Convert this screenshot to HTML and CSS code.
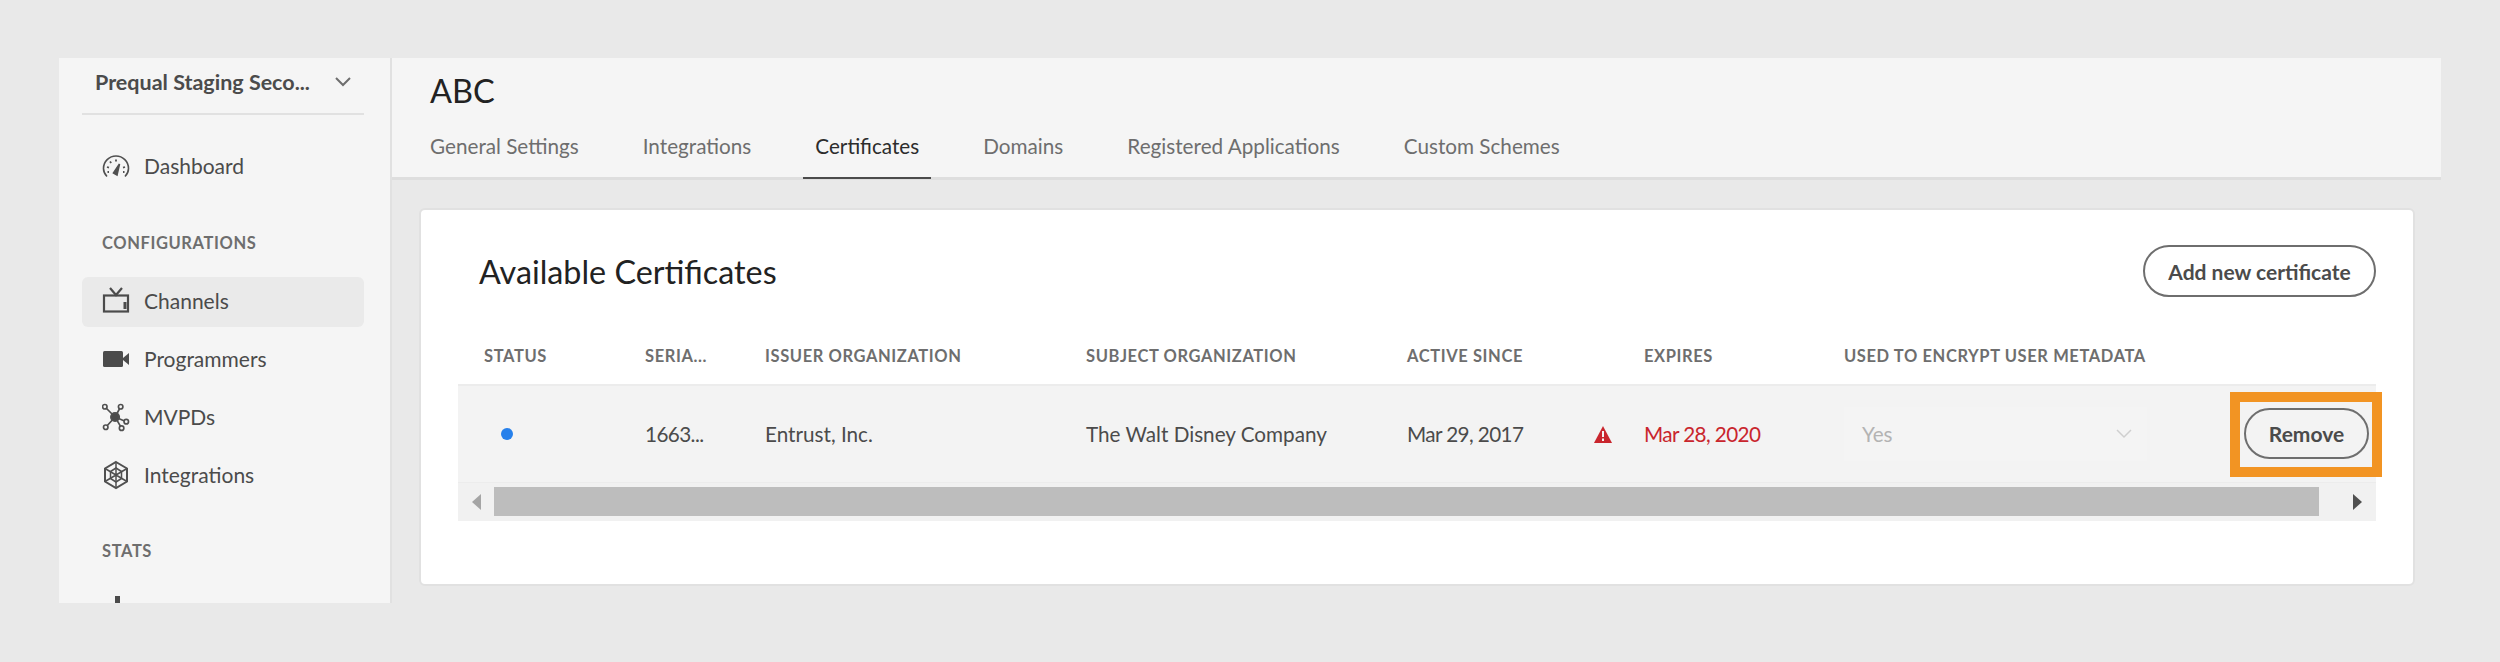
FILE: index.html
```html
<!DOCTYPE html>
<html lang="en">
<head>
    <meta charset="UTF-8">
    <title>Certificates</title>
    <link rel="stylesheet" href="styles.css">
</head>
<body>
    <div class="app">
        <div class="sidebar">
            <div class="switcher">
                <span>Prequal Staging Seco...</span>
                <svg width="16" height="10" viewBox="0 0 16 10"><path d="M1 1l7 7 7-7" fill="none" stroke="#6e6e6e" stroke-width="2"/></svg>
            </div>
            <div class="nav-item">
                <svg width="28" height="24" viewBox="0 0 28 24" fill="none" stroke="#505050" stroke-width="1.600"><path d="M5 22.500C2.500 20 1.500 17 1.500 14.500a12.500 12.500 0 0 1 25 0c0 2.500-1 5.500-3.500 8"/><path d="M11.500 19L17.500 10l-2.500 11z" fill="#505050"/><path d="M14 5.500v2M8 7.500l1.200 1.500M5 13l2 .6M23 13l-2 .6M5.500 18h1.500M21 18h1.500" stroke-width="1.800"/></svg>
                Dashboard
            </div>
            <div class="nav-title">CONFIGURATIONS</div>
            <div class="nav-item active">
                <svg width="28" height="28" viewBox="0 0 28 28" fill="none" stroke="#4b4b4b" stroke-width="2.200"><rect x="2" y="8.500" width="24" height="16"/><path d="M8 1l6 7 6-7"/><path d="M23 15v7" stroke-width="3"/></svg>
                Channels
            </div>
            <div class="nav-item">
                <svg width="28" height="24" viewBox="0 0 28 24"><rect x="1" y="4" width="20" height="16" rx="1.500" fill="#4b4b4b"/><path d="M21 11l6-5v12l-6-5z" fill="#4b4b4b"/></svg>
                Programmers
            </div>
            <div class="nav-item">
                <svg width="30" height="30" viewBox="0 0 30 30" fill="none" stroke="#505050" stroke-width="1.800"><path d="M14 15L3 4M14 15L20 4M14 15L26 20M14 15L21 27M14 15L4 26"/><circle cx="14" cy="15" r="4.500" fill="#4b4b4b"/><circle cx="3" cy="4" r="2.400" fill="#f5f5f5"/><circle cx="20" cy="4" r="2.400" fill="#f5f5f5"/><circle cx="26" cy="20" r="2.400" fill="#f5f5f5"/><circle cx="21" cy="27" r="2.400" fill="#f5f5f5"/><circle cx="4" cy="26" r="2.400" fill="#f5f5f5"/></svg>
                MVPDs
            </div>
            <div class="nav-item">
                <svg width="28" height="30" viewBox="0 0 28 30" fill="none" stroke="#505050" stroke-width="2"><path d="M14 2l11 6.500v13L14 28 3 21.500v-13z"/><path d="M14 2v26M3 8.500l22 13M25 8.500l-22 13" stroke-width="1.500"/><path d="M14 8l5.500 3.500v7L14 22l-5.500-3.500v-7z" stroke-width="1.500"/></svg>
                Integrations
            </div>
            <div class="nav-title stats">STATS</div>
            <div class="nav-item">
                <svg width="28" height="28" viewBox="0 0 28 28" fill="#4b4b4b"><rect x="13" y="0" width="5" height="26"/><rect x="3" y="8" width="5" height="18"/></svg>
                Reports
            </div>
        </div>
        <div class="main">
            <div class="page-head">
                <h1>ABC</h1>
                <div class="tabs">
                    <a class="tab">General Settings</a>
                    <a class="tab">Integrations</a>
                    <a class="tab current">Certificates</a>
                    <a class="tab">Domains</a>
                    <a class="tab">Registered Applications</a>
                    <a class="tab">Custom Schemes</a>
                </div>
            </div>
            <div class="content">
                <div class="card">
                    <div class="card-head">
                        <h2>Available Certificates</h2>
                        <button class="pill add">Add new certificate</button>
                    </div>
                    <div class="table">
                        <div class="cols heads">
                            <div>STATUS</div>
                            <div>SERIA...</div>
                            <div>ISSUER ORGANIZATION</div>
                            <div>SUBJECT ORGANIZATION</div>
                            <div>ACTIVE SINCE</div>
                            <div>EXPIRES</div>
                            <div>USED TO ENCRYPT USER METADATA</div>
                        </div>
                        <div class="cols row">
                            <div><span class="dot"></span></div>
                            <div class="num">1663...</div>
                            <div>Entrust, Inc.</div>
                            <div>The Walt Disney Company</div>
                            <div class="num">Mar 29, 2017</div>
                            <div class="num expired">
                                <svg width="20" height="19" viewBox="0 0 20 19"><path d="M10 1l9 17H1z" fill="#c9252d"/><path d="M9 6h2v6H9zM9 13.500h2V16H9z" fill="#f3f3f3"/></svg>
                                Mar 28, 2020
                            </div>
                            <div>
                                <div class="select">
                                    <span>Yes</span>
                                    <svg width="16" height="10" viewBox="0 0 16 10"><path d="M1 1l7 7 7-7" fill="none" stroke="#cfcfcf" stroke-width="1.500"/></svg>
                                </div>
                            </div>
                            <div class="action">
                                <span class="highlight"><button class="pill remove">Remove</button></span>
                            </div>
                        </div>
                        <div class="scrollbar">
                            <svg width="9" height="16" viewBox="0 0 9 16"><path d="M9 0v16L0 8z" fill="#a5a5a5"/></svg>
                            <div class="thumb"></div>
                            <svg width="9" height="16" viewBox="0 0 9 16"><path d="M0 0v16l9-8z" fill="#505050"/></svg>
                        </div>
                    </div>
                </div>
            </div>
        </div>
    </div>
</body>
</html>
```

FILE: styles.css
```css
* {
    box-sizing: border-box;
}
body {
    margin: 0;
    height: 662px;
    padding: 58px 59px;
    background-color: #e9e9e9;
    font-family: "Lato", "Liberation Sans", sans-serif;
    color: #4b4b4b;
    overflow: hidden;
}
.app {
    display: flex;
    height: 545px;
    overflow: hidden;
}
.sidebar {
    width: 333px;
    flex: none;
    padding: 0 26px 0 23px;
    background-color: #f5f5f5;
    border-right: 2px solid #e1e1e1;
}
.switcher {
    display: flex;
    align-items: center;
    justify-content: space-between;
    height: 57px;
    padding: 0 13px 8px 13px;
    border-bottom: 2px solid #e1e1e1;
    font-size: 21.5px;
    font-weight: 700;
    margin-bottom: 27px;
}
.nav-item {
    display: flex;
    align-items: center;
    gap: 14px;
    height: 50px;
    margin-bottom: 8px;
    padding: 0 0 3px 20px;
    border-radius: 6px;
    font-size: 21px;
}
.nav-item svg {
    width: 28px;
    flex: none;
}
.nav-item.active {
    background-color: #eaeaea;
}
.nav-title {
    margin: 41px 0 24px 20px;
    font-size: 16.500px;
    font-weight: 700;
    letter-spacing: 0.6px;
    color: #6e6e6e;
}
.nav-title.stats {
    margin-top: 40px;
    margin-bottom: 25px;
}
.main {
    flex: 1;
    min-width: 0;
}
.page-head {
    height: 122px;
    padding: 11px 0 0 38px;
    background-color: #f5f5f5;
    border-bottom: 3px solid #dedede;
}
h1 {
    margin: 0;
    font-size: 32.500px;
    font-weight: 400;
    line-height: 44px;
    color: #222;
}
.tabs {
    display: flex;
    gap: 40px;
    margin-top: 16px;
    margin-left: -12px;
}
.tab {
    height: 50px;
    padding: 0 12px;
    line-height: 34px;
    font-size: 20.700px;
    color: #6e6e6e;
}
.tab.current {
    color: #2c2c2c;
    border-bottom: 2px solid #4b4b4b;
}
.content {
    padding: 28px 26px 0 27px;
}
.card {
    height: 378px;
    padding: 35px 37px 0 37px;
    background-color: #fff;
    border: 2px solid #e1e1e1;
    border-radius: 6px;
}
.card-head {
    display: flex;
    align-items: center;
    justify-content: space-between;
    height: 52px;
    padding-left: 21px;
}
h2 {
    margin: 0;
    font-size: 32.300px;
    font-weight: 400;
    color: #222;
}
.pill {
    border: 2px solid #6e6e6e;
    border-radius: 26px;
    background: transparent;
    font-family: inherit;
    font-size: 21px;
    font-weight: 700;
    color: #4b4b4b;
}
.add {
    width: 233px;
    height: 52px;
}
.table {
    margin-top: 31px;
}
.cols {
    display: grid;
    grid-template-columns: 161px 120px 321px 321px 237px 200px 1fr 146px;
    align-items: center;
}
.cols > div {
    padding-left: 26px;
}
.heads {
    height: 56px;
    font-size: 16.500px;
    font-weight: 700;
    letter-spacing: 0.6px;
    color: #6e6e6e;
}
.row {
    height: 98px;
    background-color: #f3f3f3;
    border-top: 2px solid #ececec;
    font-size: 20.700px;
}
.num {
    letter-spacing: -0.6px;
}
.dot {
    display: block;
    width: 12px;
    height: 12px;
    margin-left: 17px;
    border-radius: 50%;
    background-color: #2680eb;
}
.cols > .expired {
    display: flex;
    align-items: center;
    gap: 31px;
    margin-left: -25px;
    padding-left: 0;
    color: #c9252d;
}
.expired svg {
    flex: none;
}
.select {
    display: flex;
    align-items: center;
    justify-content: space-between;
    width: 303px;
    height: 54px;
    padding: 0 15px 0 18px;
    background-color: #f4f4f4;
    color: #b3b3b3;
}
.cols > .action {
    padding-left: 0;
}
.highlight {
    display: block;
    width: 152px;
    padding: 6px 3px 8px 4px;
    border: 10px solid #f29423;
}
.remove {
    display: block;
    width: 125px;
    height: 51px;
}
.scrollbar {
    display: flex;
    align-items: center;
    height: 39px;
    padding: 0 14px 1px;
    background-color: #f1f1f1;
    border-top: 1px solid #ececec;
}
.scrollbar svg {
    flex: none;
}
.thumb {
    flex: 1;
    height: 29px;
    margin: 0 34px 0 13px;
    background-color: #bdbdbd;
}
```
